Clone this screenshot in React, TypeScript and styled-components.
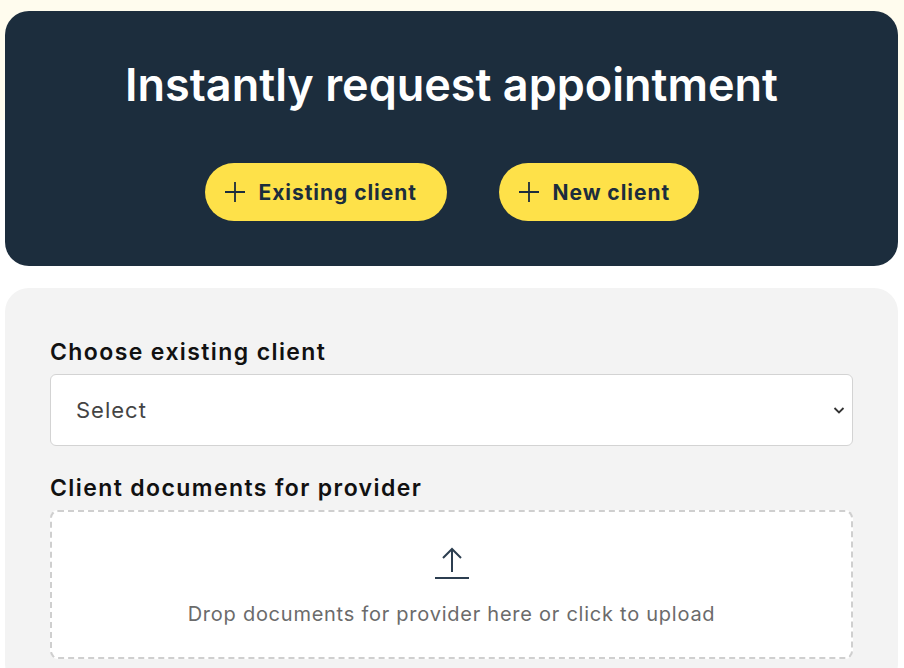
import React from "react";
import styled, { createGlobalStyle } from "styled-components";

const GlobalStyle = createGlobalStyle`
  html, body {
    margin: 0;
    padding: 0;
    background: #ffffff;
  }
  * {
    box-sizing: border-box;
  }
  body {
    font-family: Inter, "Noto Sans", Arial, sans-serif;
  }
`;

const Page = styled.div`
  width: 904px;
  min-height: 668px;
  overflow: hidden;
`;

const HeroWrap = styled.div`
  padding: 11px 6px 0 5px;
  background: linear-gradient(#fffcee 0 120px, #ffffff 120px);
`;

const Hero = styled.section`
  background: #1c2d3d;
  border-radius: 24px;
  height: 255px;
  padding-top: 51px;
  display: flex;
  flex-direction: column;
  align-items: center;
`;

const Title = styled.h1`
  margin: 0;
  color: #ffffff;
  font-size: 45px;
  font-weight: 600;
  line-height: 45px;
  letter-spacing: 0;
`;

const ButtonRow = styled.div`
  display: flex;
  gap: 52px;
  margin-top: 56px;
`;

const PillButton = styled.button<{ $width: number }>`
  width: ${(p) => p.$width}px;
  height: 58px;
  border: none;
  border-radius: 29px;
  background: #fee149;
  color: #1c2d3d;
  font-family: inherit;
  font-size: 21px;
  font-weight: 700;
  letter-spacing: 0.95px;
  display: flex;
  align-items: center;
  gap: 13px;
  padding: 0 0 0 19px;
  cursor: pointer;
`;

const FormCard = styled.section`
  margin: 22px 6px 0 5px;
  background: #f3f3f3;
  border-radius: 24px;
  padding: 50px 45px 10px 45px;
  min-height: 400px;
`;

const Label = styled.label`
  display: block;
  font-size: 23px;
  font-weight: 600;
  color: #111111;
  line-height: 28px;
  letter-spacing: 1.4px;
  margin-bottom: 8px;
`;

const SelectBox = styled.div`
  position: relative;
  height: 72px;
  background: #ffffff;
  border: 1px solid #d3d3d3;
  border-radius: 6px;
  display: flex;
  align-items: center;
  padding: 0 25px;
  font-size: 22px;
  letter-spacing: 1px;
  color: #444444;
  margin-bottom: 28px;
`;

const Chevron = styled.svg`
  position: absolute;
  right: 6px;
  top: 50%;
  transform: translateY(-50%);
`;

const DropZone = styled.div`
  height: 149px;
  background: #ffffff;
  border: 2px dashed #cfcfcf;
  border-radius: 8px;
  display: flex;
  flex-direction: column;
  align-items: center;
  padding-top: 34px;
  gap: 22px;
`;

const DropText = styled.div`
  font-size: 20px;
  letter-spacing: 0.75px;
  color: #6b6b6b;
`;

const PlusIcon = () => (
  <svg width="22" height="22" viewBox="0 0 22 22" fill="none" stroke="#1c2d3d" strokeWidth="1.8">
    <path d="M11 1v20M1 11h20" />
  </svg>
);

export default function App() {
  return (
    <Page>
      <GlobalStyle />
      <HeroWrap>
        <Hero>
          <Title>Instantly request appointment</Title>
          <ButtonRow>
            <PillButton $width={242}>
              <PlusIcon />
              Existing client
            </PillButton>
            <PillButton $width={200}>
              <PlusIcon />
              New client
            </PillButton>
          </ButtonRow>
        </Hero>
      </HeroWrap>
      <FormCard>
        <Label>Choose existing client</Label>
        <SelectBox>
          Select
          <Chevron width="14" height="14" viewBox="0 0 14 14" fill="none" stroke="#333" strokeWidth="1.8">
            <path d="M2.5 5l4.5 4.5L11.5 5" />
          </Chevron>
        </SelectBox>
        <Label>Client documents for provider</Label>
        <DropZone>
          <svg width="36" height="34" viewBox="0 0 36 34" fill="none" stroke="#2c3e50" strokeWidth="2">
            <path d="M18 26V3M9 12l9-9 9 9M1 32h34" />
          </svg>
          <DropText>Drop documents for provider here or click to upload</DropText>
        </DropZone>
      </FormCard>
    </Page>
  );
}
